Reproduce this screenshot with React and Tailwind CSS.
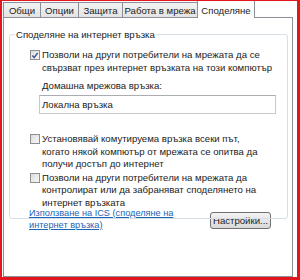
import React from "react";

function Checkbox({ checked }) {
  return (
    <div className="w-[10px] h-[10px] shrink-0 border border-[#8f8f8f] bg-gradient-to-br from-[#dcdcdc] to-[#f8f8f8] flex items-center justify-center">
      {checked && (
        <svg width="9" height="9" viewBox="0 0 9 9">
          <path d="M1.5 4.5 L3.6 6.8 L7.6 1.6" fill="none" stroke="#3d5b8f" strokeWidth="1.6" />
        </svg>
      )}
    </div>
  );
}

function Tab({ label, w, selected }) {
  if (selected) {
    return (
      <div
        className={`${w} h-[18px] -mb-[1px] -mt-[1px] relative z-10 bg-white border-t border-l border-r border-[#8c8f95] flex items-center justify-center pt-[1px]`}
      >
        {label}
      </div>
    );
  }
  return (
    <div
      className={`${w} h-[15px] bg-gradient-to-b from-[#f2f2f2] to-[#e4e4e4] border-t border-l border-[#8c8f95] flex items-center justify-center`}
    >
      {label}
    </div>
  );
}

export default function App() {
  return (
    <div className="w-[300px] h-[280px] overflow-hidden whitespace-nowrap bg-white border-l-2 border-r-[3px] border-b-[3px] border-t border-[#e3161e] font-['Liberation_Sans',Arial,sans-serif] text-[9.6px] leading-[13px] text-[#222]">
      <div className="flex items-end h-[16px] pl-[1px]">
        <Tab label="Общи" w="w-[37px]" />
        <Tab label="Опции" w="w-[38px]" />
        <Tab label="Защита" w="w-[44px]" />
        <Tab label="Работа в мрежа" w="w-[75px]" />
        <Tab label="Споделяне" w="w-[58px]" selected />
      </div>
      <div className="ml-[1px] w-[290px] h-[260px] border border-[#8d9096] bg-white">
        <div className="ml-[5px] mt-[16px] w-[279px] h-[185px] border border-[#d5dfe5] rounded-[3px] relative">
          <div className="absolute -top-[7px] left-[5px] bg-white px-[1px]">
            Споделяне на интернет връзка
          </div>
          <div className="flex items-start ml-[20px] mt-[13px] gap-[2px]">
            <div className="mt-[2px]">
              <Checkbox checked />
            </div>
            <div>
              Позволи на други потребители на мрежата да се
              <br />
              свързват през интернет връзката на този компютър
            </div>
          </div>
          <div className="ml-[32px] mt-[5px]">Домашна мрежова връзка:</div>
          <div className="ml-[29px] mt-[3px] w-[237px] h-[19px] border border-[#c5c8cc] border-t-[#abadb3] flex items-center pl-[2px]">
            Локална връзка
          </div>
          <div className="flex items-start ml-[20px] mt-[19px] gap-[2px] leading-[12.5px]">
            <div className="mt-[1px]">
              <Checkbox />
            </div>
            <div>
              Установявай комутируема връзка всеки път,
              <br />
              когато някой компютър от мрежата се опитва да
              <br />
              получи достъп до интернет
            </div>
          </div>
          <div className="flex items-start ml-[20px] mt-[1px] gap-[2px] leading-[12.5px]">
            <div className="mt-[1px]">
              <Checkbox />
            </div>
            <div>
              Позволи на други потребители на мрежата да
              <br />
              контролират или да забраняват споделянето на
              <br />
              интернет връзката
            </div>
          </div>
        </div>
        <div className="flex items-start -mt-[12px] ml-[25px] mr-[21px] leading-[12px]">
          <div className="text-[#1c64b4] text-[9.2px] underline underline-offset-[1px]">
            Използване на ICS (споделяне на
            <br />
            интернет връзка)
          </div>
          <div className="ml-auto mt-[5px] w-[61px] h-[17px] border border-[#707070] rounded-[3px] bg-gradient-to-b from-[#f3f3f3] to-[#d9d9d9] flex items-center justify-center text-[#222]">
            Настройки...
          </div>
        </div>
      </div>
    </div>
  );
}
